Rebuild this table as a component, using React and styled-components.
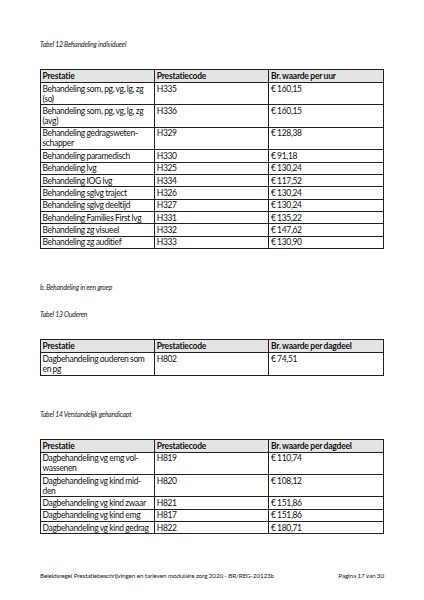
import React from "react";
import styled, { createGlobalStyle } from "styled-components";

const Global = createGlobalStyle`
  html, body { margin: 0; padding: 0; background: #fff; }
  body { font-family: Lato, "Open Sans", sans-serif; color: #111; }
`;

const Page = styled.div`
  width: 424px;
  height: 600px;
  box-sizing: border-box;
  padding: 40px 40px 0 40px;
  display: flex;
  flex-direction: column;
  background: #fff;
  overflow: hidden;
`;

const Caption = styled.div`
  font-style: italic;
  font-size: 6.8px;
  line-height: 9px;
  letter-spacing: -0.2px;
  margin-top: ${(p) => p.$mt || 0}px;
  color: #222;
`;

const Table = styled.table`
  width: 344px;
  border-collapse: collapse;
  table-layout: fixed;
  border: 1.5px solid #222;
  margin-top: ${(p) => p.$mt || 0}px;
  font-size: 8.5px;
  line-height: 10px;
  letter-spacing: -0.33px;
  word-spacing: -0.3px;
`;

const Th = styled.th`
  background: #e4e4e4;
  border: 1px solid #222;
  text-align: left;
  font-weight: 700;
  letter-spacing: -0.2px;
  padding: 1px 1px 1px 1.5px;
  vertical-align: top;
`;

const Td = styled.td`
  border: 1px solid #222;
  padding: 0.7px 1px 0.7px 1.5px;
  vertical-align: top;
  font-weight: 400;
  white-space: nowrap;
`;

const Footer = styled.div`
  margin-top: auto;
  margin-bottom: 20px;
  display: flex;
  justify-content: space-between;
  font-size: 6.4px;
  line-height: 9px;
  letter-spacing: -0.15px;
  color: #222;
`;

const PriceTable = ({ unit, rows, mt }) => (
  <Table $mt={mt}>
    <colgroup>
      <col style={{ width: "33.3%" }} />
      <col style={{ width: "33.3%" }} />
      <col style={{ width: "33.4%" }} />
    </colgroup>
    <thead>
      <tr>
        <Th>Prestatie</Th>
        <Th>Prestatiecode</Th>
        <Th>Br. waarde per {unit}</Th>
      </tr>
    </thead>
    <tbody>
      {rows.map(([a, b, c], i) => (
        <tr key={i}>
          <Td>{a}</Td>
          <Td>{b}</Td>
          <Td>{c}</Td>
        </tr>
      ))}
    </tbody>
  </Table>
);

const t12 = [
  [<>Behandeling som, pg, vg, lg, zg<br />(so)</>, "H335", "€ 160,15"],
  [<>Behandeling som, pg, vg, lg, zg<br />(avg)</>, "H336", "€ 160,15"],
  [<>Behandeling gedragsweten-<br />schapper</>, "H329", "€ 128,38"],
  ["Behandeling paramedisch", "H330", "€ 91,18"],
  ["Behandeling lvg", "H325", "€ 130,24"],
  ["Behandeling IOG lvg", "H334", "€ 117,52"],
  ["Behandeling sglvg traject", "H326", "€ 130,24"],
  ["Behandeling sglvg deeltijd", "H327", "€ 130,24"],
  ["Behandeling Families First lvg", "H331", "€ 135,22"],
  ["Behandeling zg visueel", "H332", "€ 147,62"],
  ["Behandeling zg auditief", "H333", "€ 130,90"],
];

const t13 = [[<>Dagbehandeling ouderen som<br />en pg</>, "H802", "€ 74,51"]];

const t14 = [
  [<>Dagbehandeling vg emg vol-<br />wassenen</>, "H819", "€ 110,74"],
  [<>Dagbehandeling vg kind mid-<br />den</>, "H820", "€ 108,12"],
  ["Dagbehandeling vg kind zwaar", "H821", "€ 151,86"],
  ["Dagbehandeling vg kind emg", "H817", "€ 151,86"],
  ["Dagbehandeling vg kind gedrag", "H822", "€ 180,71"],
];

export default function App() {
  return (
    <>
      <Global />
      <Page>
        <Caption>Tabel 12 Behandeling individueel</Caption>
        <PriceTable unit="uur" rows={t12} mt={20} />
        <Caption $mt={34}>b. Behandeling in een groep</Caption>
        <Caption $mt={18}>Tabel 13 Ouderen</Caption>
        <PriceTable unit="dagdeel" rows={t13} mt={20} />
        <Caption $mt={34}>Tabel 14 Verstandelijk gehandicapt</Caption>
        <PriceTable unit="dagdeel" rows={t14} mt={20} />
        <Footer>
          <span>Beleidsregel Prestatiebeschrijvingen en tarieven modulaire zorg 2020 - BR/REG-20123b</span>
          <span>Pagina 17 van 30</span>
        </Footer>
      </Page>
    </>
  );
}
